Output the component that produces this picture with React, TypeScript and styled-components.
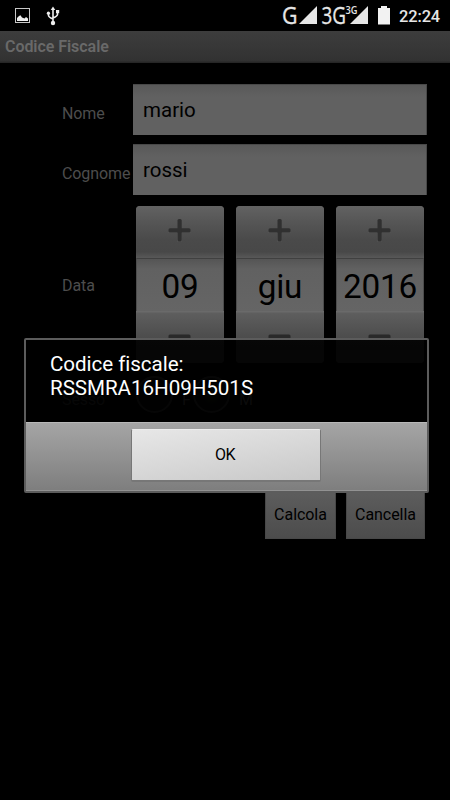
import React from "react";
import styled, { createGlobalStyle } from "styled-components";

const GlobalStyle = createGlobalStyle`
  * { box-sizing: border-box; }
  body { margin: 0; background: #000; font-family: Roboto, sans-serif; }
`;

const Screen = styled.div`
  position: relative;
  display: flex;
  flex-direction: column;
  width: 450px;
  height: 800px;
  background: #000;
  overflow: hidden;
`;

const StatusBar = styled.header`
  display: flex;
  justify-content: space-between;
  height: 31px;
  color: #e6e6e6;
`;

const StatusIcons = styled.svg`
  display: block;
  flex: none;
`;

const Clock = styled.time`
  width: 51px;
  font-size: 16.4px;
  font-weight: 500;
  line-height: 33px;
  letter-spacing: -0.1px;
`;

const StatusGroup = styled.div`
  display: flex;
`;

const TitleBar = styled.h1`
  height: 32px;
  margin: 0;
  padding-left: 5px;
  font-size: 16px;
  font-weight: 600;
  line-height: 32px;
  letter-spacing: -0.05px;
  color: #696969;
  background: linear-gradient(#3d3d3d, #323232 92%, #232323);
`;

const Form = styled.main`
  display: flex;
  flex-direction: column;
  padding: 21px 23px 0 62px;
`;

const Row = styled.div<{ $height: number; $gap: number }>`
  display: flex;
  height: ${(p) => p.$height}px;
  margin-bottom: ${(p) => p.$gap}px;
`;

const Label = styled.label<{ $top: number }>`
  flex: none;
  width: 71px;
  padding-top: ${(p) => p.$top}px;
  font-size: 16px;
  line-height: 20px;
  letter-spacing: -0.1px;
  white-space: nowrap;
  color: #4d4d4d;
`;

const Field = styled.div`
  flex: 1;
  padding-left: 10px;
  font-size: 20.5px;
  line-height: 50px;
  color: #000;
  background: linear-gradient(#595959, #616161 12px);
  border: solid #484848;
  border-width: 1px 1px 0 0;
`;

const Pickers = styled.div`
  display: flex;
  gap: 12px;
  padding-left: 3px;
`;

const Picker = styled.div`
  width: 88px;
  height: 157px;
  border-radius: 4px;
  overflow: hidden;
  background: #555;
`;

const Step = styled.div<{ $down?: boolean }>`
  display: flex;
  justify-content: center;
  align-items: flex-start;
  height: 52px;
  background: ${(p) =>
    p.$down
      ? "linear-gradient(#6a6a6a 1px, #5e5e5e 2px, #4b4b4b 55%, #484848)"
      : "linear-gradient(#626262, #565656 30%, #4a4a4a 65%, #484848 88%, #585858)"};
`;

const PickerValue = styled.div`
  height: 53px;
  border: solid #4c4c4c;
  border-width: 1px 1px 0;
  border-top-color: #404040;
  background: linear-gradient(#555, #616161 10px, #656565);
  font-size: 33.3px;
  line-height: 56px;
  letter-spacing: -0.2px;
  text-align: center;
  color: #000;
`;

const Radio = styled.div`
  display: flex;
  align-items: center;
  width: 57px;
  gap: 9px;
  padding-left: 3px;
  font-size: 16px;
  color: #777;
`;

const RadioCaption = styled.span`
  padding-top: 9px;
`;

const RadioDot = styled.span<{ $on?: boolean }>`
  flex: none;
  width: 37px;
  height: 37px;
  border: 2px solid #484848;
  border-radius: 50%;
  background: ${(p) => (p.$on ? "radial-gradient(#263d12, #101010 45%)" : "#101010")};
`;

const Actions = styled.div`
  display: flex;
  justify-content: flex-end;
  gap: 10px;
  padding-right: 2px;
  margin-top: 75px;
`;

const Action = styled.button<{ $width: number }>`
  width: ${(p) => p.$width}px;
  height: 51px;
  padding: 2px 0 0;
  border: 1px solid #484848;
  background: linear-gradient(#5e5e5e, #4c4c4c);
  font: 16px Roboto, sans-serif;
  letter-spacing: -0.05px;
  color: #000;
`;

const Dialog = styled.section`
  position: absolute;
  left: 24px;
  top: 338px;
  display: flex;
  flex-direction: column;
  width: 405px;
  height: 155px;
  border: 2px solid #5c5c5c;
  border-radius: 2px;
  background: rgba(0, 0, 0, 0.91);
`;

const Message = styled.p`
  flex: 1;
  margin: 0;
  padding: 13px 24px 0;
  font-size: 20.6px;
  line-height: 23.5px;
  letter-spacing: -0.05px;
  color: #fff;
`;

const DialogFooter = styled.footer`
  display: flex;
  justify-content: center;
  height: 69px;
  padding: 6px 2px 0 0;
  border-top: 1px solid #b8b8b8;
  border-bottom: 1px solid #929292;
  background: linear-gradient(#a5a5a5, #7e7e7e);
`;

const OkButton = styled.button`
  width: 190px;
  height: 53px;
  padding: 0 1px 1px 0;
  border: solid #777;
  border-width: 1px 1px 2px;
  border-top-color: #eee;
  border-radius: 2px;
  background: linear-gradient(170deg, #e7e7e7, #d8d8d8 50%, #c8c8c8);
  font: 16px Roboto, sans-serif;
  letter-spacing: -0.6px;
  color: #000;
`;

const dateParts = ["09", "giu", "2016"];

function NotificationIcons() {
  return (
    <StatusIcons width="80" height="31" viewBox="0 0 80 31">
      <rect x="15.5" y="8.5" width="14" height="14" fill="none" stroke="#c8c8c8" />
      <path d="M17 21V18L19 16L20.5 15.2L22 17.5L24.5 18.5L26 17L28 18.5V21Z" fill="#eee" />
      <g fill="none" stroke="#eee" strokeWidth="1.6">
        <path d="M53 9V23M48.5 13.5V15.5Q48.5 17 53 19M57.5 12V14.5Q57.5 16 53 18" />
      </g>
      <path d="M50.7 10L53 6.5L55.3 10Z" fill="#eee" />
      <circle cx="53" cy="23" r="2.2" fill="#eee" />
      <circle cx="48.4" cy="13.2" r="1.6" fill="#eee" />
      <rect x="56" y="10" width="3.2" height="3.2" fill="#eee" />
    </StatusIcons>
  );
}

function SignalIcons() {
  return (
    <StatusIcons width="121" height="31" viewBox="278 0 121 31" fill="#e6e6e6" fontFamily="Open Sans, sans-serif">
      <g stroke="#e6e6e6" strokeWidth="0.3">
        <text x="282" y="24" fontSize="23.5" textLength="15.5" lengthAdjust="spacingAndGlyphs">G</text>
        <text x="321.5" y="24" fontSize="23.5" textLength="24.5" lengthAdjust="spacingAndGlyphs">3G</text>
      </g>
      <path d="M299 24L317 6V24Z" />
      <text x="345.5" y="14" fontSize="10" fontWeight="600" textLength="12" lengthAdjust="spacingAndGlyphs">3G</text>
      <path d="M350 24L368 6V24Z" />
      <path d="M378 8H381V6H387V8H390V24.5H378Z" fill="#f2f2f2" />
    </StatusIcons>
  );
}

function StepIcon({ minus }: { minus?: boolean }) {
  return (
    <svg width="88" height="52" viewBox="0 0 88 52">
      {minus ? (
        <rect x="32.5" y="23.5" width="22" height="4.5" rx="1.5" fill="#292929" />
      ) : (
        <>
          <path d="M32.5 26.5H41.5V35.3H45.5V26.5H54.5" fill="none" stroke="#5a5a5a" />
          <g fill="#303030">
            <rect x="32.5" y="22.3" width="22" height="4.2" rx="1.5" />
            <rect x="41.5" y="13" width="4.2" height="22.5" rx="1.5" />
          </g>
        </>
      )}
    </svg>
  );
}

export default function App() {
  return (
    <>
      <GlobalStyle />
      <Screen>
        <StatusBar>
          <NotificationIcons />
          <StatusGroup>
            <SignalIcons />
            <Clock>22:24</Clock>
          </StatusGroup>
        </StatusBar>
        <TitleBar>Codice Fiscale</TitleBar>
        <Form>
          <Row $height={51} $gap={9}>
            <Label $top={20}>Nome</Label>
            <Field>mario</Field>
          </Row>
          <Row $height={51} $gap={11}>
            <Label $top={20}>Cognome</Label>
            <Field>rossi</Field>
          </Row>
          <Row $height={157} $gap={13}>
            <Label $top={70}>Data</Label>
            <Pickers>
              {dateParts.map((part) => (
                <Picker key={part}>
                  <Step><StepIcon /></Step>
                  <PickerValue>{part}</PickerValue>
                  <Step $down><StepIcon minus /></Step>
                </Picker>
              ))}
            </Pickers>
          </Row>
          <Row $height={37} $gap={0}>
            <Label $top={14}>Sesso</Label>
            <Radio><RadioDot /><RadioCaption>F</RadioCaption></Radio>
            <Radio><RadioDot $on /><RadioCaption>M</RadioCaption></Radio>
          </Row>
          <Actions>
            <Action $width={71}>Calcola</Action>
            <Action $width={79}>Cancella</Action>
          </Actions>
        </Form>
        <Dialog role="dialog">
          <Message>
            Codice fiscale:
            <br />
            RSSMRA16H09H501S
          </Message>
          <DialogFooter>
            <OkButton>OK</OkButton>
          </DialogFooter>
        </Dialog>
      </Screen>
    </>
  );
}
